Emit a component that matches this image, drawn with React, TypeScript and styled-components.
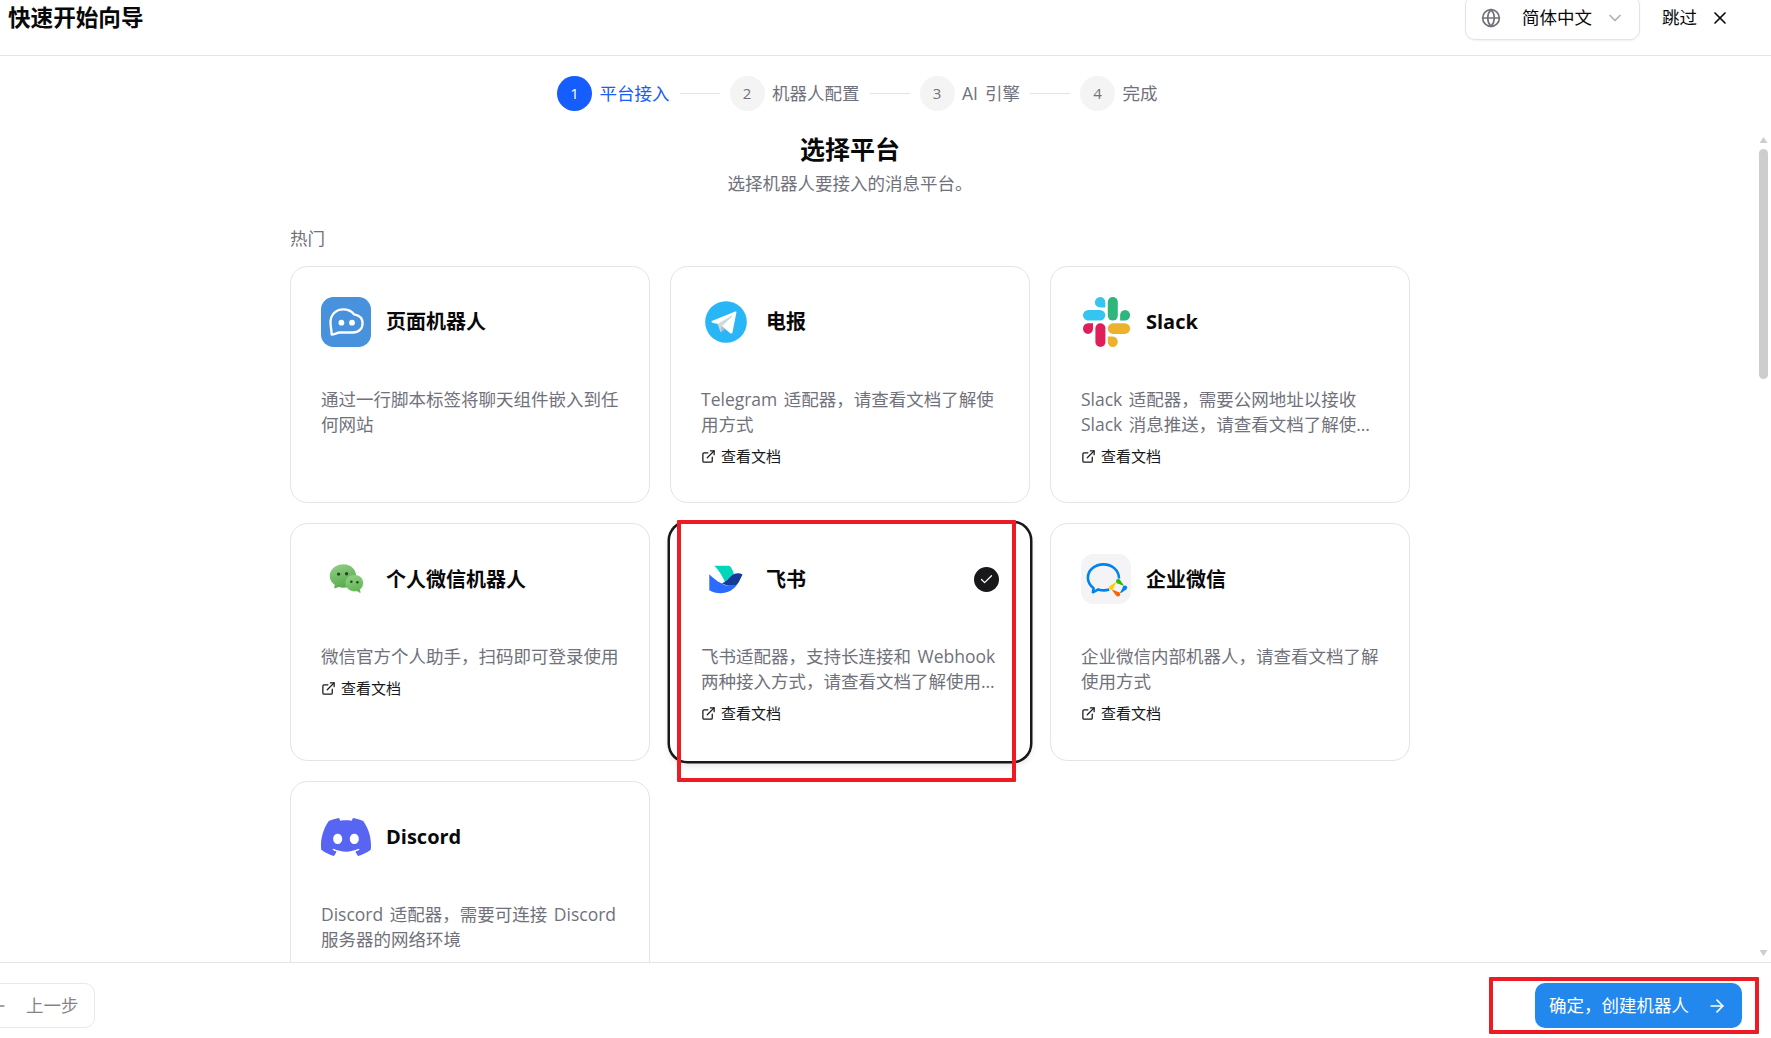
import React from 'react';
import styled, { createGlobalStyle, css } from 'styled-components';
import { ArrowLeft, ArrowRight, Check, ChevronDown, ExternalLink, Globe, X } from 'lucide-react';
import { SiDiscord } from 'react-icons/si';

const GlobalStyle = createGlobalStyle`
  * { box-sizing: border-box; }
  body {
    margin: 0;
    background: #fff;
    color: #09090b;
    font-family: "Open Sans", "Noto Sans CJK SC", sans-serif;
    font-size: 17.5px;
    line-height: 25px;
    overflow: hidden;
  }
  button { font: inherit; color: inherit; background: none; border: 0; padding: 0; }
  h1, h2, h3, p { margin: 0; }
`;

const Page = styled.div`
  display: flex;
  flex-direction: column;
  height: 1038px;
  width: 1771px;
  overflow: hidden;
`;

const Header = styled.header`
  display: flex;
  align-items: center;
  justify-content: space-between;
  height: 56px;
  padding: 0 41px 20px 8px;
  border-bottom: 1px solid #e4e4e7;
`;

const HeaderTitle = styled.h1`
  padding-top: 1px;
  font-size: 22.6px;
  font-weight: 700;
  line-height: 30px;
`;

const HeaderActions = styled.div`
  display: flex;
  align-items: center;
  gap: 22px;
`;

const LanguageSelect = styled.button`
  display: flex;
  align-items: center;
  width: 175px;
  height: 45px;
  margin: -5px 0;
  padding: 0 14px 0 15px;
  border: 1px solid #e4e4e7;
  border-radius: 10px;
  box-shadow: 0 1px 2px rgba(0, 0, 0, 0.06);

  svg:first-child { color: #71717b; }
  svg:last-child { color: #71717b; opacity: 0.55; margin-left: auto; }
  span { margin-left: 21px; }
`;

const SkipButton = styled.button`
  display: flex;
  align-items: center;
  gap: 13px;
`;

const Stepper = styled.nav`
  display: flex;
  align-items: flex-start;
  gap: 10px;
  height: 76px;
  flex: none;
  padding: 20px 0 0 557px;
`;

const StepItem = styled.div<{ $active?: boolean }>`
  display: flex;
  align-items: center;
  gap: 7.5px;
  color: ${(p) => (p.$active ? '#155dfc' : '#71717b')};
  white-space: nowrap;
  word-spacing: 2.5px;
`;

const StepNumber = styled.span<{ $active?: boolean }>`
  display: flex;
  align-items: center;
  justify-content: center;
  width: 35px;
  height: 35px;
  border-radius: 50%;
  font-size: 15px;
  background: ${(p) => (p.$active ? '#155dfc' : '#f4f4f5')};
  color: ${(p) => (p.$active ? '#fff' : '#71717b')};
`;

const StepLine = styled.span`
  width: 40px;
  height: 1px;
  margin-top: 17px;
  background: #e4e4e7;
`;

const Body = styled.main`
  display: flex;
  justify-content: space-between;
  flex: 1;
  min-height: 0;
  overflow: hidden;
`;

const Content = styled.div`
  width: 1120px;
  margin-left: 290px;
`;

const Heading = styled.h2`
  font-size: 25px;
  font-weight: 700;
  line-height: 35px;
  text-align: center;
`;

const Subtitle = styled.p`
  margin-top: 4px;
  color: #71717b;
  text-align: center;
`;

const GroupLabel = styled.p`
  margin: 30px 0 14.75px;
  color: #71717b;
`;

const Grid = styled.div`
  display: grid;
  grid-template-columns: repeat(3, 360px);
  grid-auto-rows: 237.5px;
  gap: 20px;
`;

const Card = styled.article<{ $selected?: boolean }>`
  padding: 30px;
  border: 1px solid #e4e4e7;
  border-radius: 17.5px;
  background: #fff;
  ${(p) =>
    p.$selected &&
    css`
      border-color: transparent;
      box-shadow: 0 0 0 2.5px #18181b, 0 4px 7px 1px rgba(0, 0, 0, 0.1);
    `}
`;

const CardHead = styled.div`
  display: flex;
  align-items: center;
  gap: 15px;
  height: 50px;

  > svg { flex: none; }
`;

const CardTitle = styled.h3`
  flex: 1;
  font-size: 20px;
  font-weight: 700;
`;

const CheckMark = styled.span`
  display: flex;
  align-items: center;
  justify-content: center;
  width: 25px;
  height: 25px;
  border-radius: 50%;
  background: #18181b;
  color: #fff;
`;

const Description = styled.p`
  margin-top: 40px;
  color: #71717b;
  word-spacing: 2px;
`;

const DocLink = styled.a`
  display: flex;
  align-items: center;
  gap: 5px;
  margin-top: 9px;
  font-size: 15px;
  line-height: 20px;
  color: #18181b;

  svg { position: relative; top: 0.5px; }
`;

const ScrollTrack = styled.div`
  display: flex;
  flex-direction: column;
  align-items: center;
  width: 13px;
  padding: 5px 2px 6px 0;
`;

const Thumb = styled.div`
  width: 9px;
  height: 230px;
  margin-top: 6px;
  border-radius: 5px;
  background: #cdcdcd;
`;

const ScrollArrow = styled.span<{ $down?: boolean }>`
  width: 8px;
  height: 6px;
  background: #cdcdcd;
  clip-path: ${(p) => (p.$down ? 'polygon(0 0, 100% 0, 50% 100%)' : 'polygon(50% 0, 100% 100%, 0 100%)')};
  margin-top: ${(p) => (p.$down ? 'auto' : '0')};
`;

const Footer = styled.footer`
  display: flex;
  align-items: flex-start;
  justify-content: space-between;
  height: 76px;
  flex: none;
  padding: 20px 29px 0 0;
  border-top: 1px solid #e4e4e7;
`;

const BackButton = styled.button`
  display: flex;
  align-items: center;
  gap: 18px;
  height: 45px;
  margin-left: -27px;
  padding: 0 15px 0 14px;
  border: 1px solid #d4d4d8;
  border-radius: 10px;
  opacity: 0.5;
`;

const NextButton = styled.button`
  display: flex;
  align-items: center;
  justify-content: space-between;
  width: 207px;
  height: 45px;
  padding: 0 15px 0 14px;
  border-radius: 10px;
  background: #2388ee;
  color: #fff;
`;

const Marker = styled.div<{ $x: number; $y: number; $w: number; $h: number }>`
  position: absolute;
  left: ${(p) => p.$x}px;
  top: ${(p) => p.$y}px;
  width: ${(p) => p.$w}px;
  height: ${(p) => p.$h}px;
  border: 4px solid #ed1c24;
  border-radius: 1px;
`;

const WebBotLogo = () => (
  <svg width="50" height="50" viewBox="0 0 50 50" fill="none">
    <rect width="50" height="50" rx="12.5" fill="#4791dd" />
    <path
      d="M10.6 37.6C10.9 34 9.5 30.5 9.5 25.5C9.5 17.8 14.8 12.3 22.2 12.3C27.2 12.3 30.8 14.3 33 17.3C38.2 18.2 41.6 21.4 41.6 26.2C41.6 31.6 37.7 35.5 32 35.5H19C15.8 35.5 13.4 37.7 10.6 37.6Z"
      stroke="#fff"
      strokeWidth="2.3"
      strokeLinejoin="round"
    />
    <circle cx="20.4" cy="25.7" r="2.9" fill="#fff" />
    <circle cx="31" cy="25.7" r="2.9" fill="#fff" />
  </svg>
);

const TelegramLogo = () => (
  <svg width="50" height="50" viewBox="0 0 48 48">
    <circle cx="24" cy="24" r="20" fill="#29b6f6" />
    <path fill="#fff" d="M33.95,15l-3.746,19.126c0,0-0.161,0.874-1.245,0.874c-0.576,0-0.873-0.274-0.873-0.274l-8.114-6.733l-3.97-2.001l-5.095-1.355c0,0-0.907-0.262-0.907-1.012c0-0.625,0.933-0.923,0.933-0.923l21.316-8.468c-0.001-0.001,0.651-0.235,1.126-0.234C33.667,14,34,14.125,34,14.5C34,14.75,33.95,15,33.95,15z" />
    <path fill="#b0bec5" d="M23,30.505l-3.426,3.374c0,0-0.149,0.115-0.348,0.12c-0.069,0.002-0.143-0.009-0.219-0.043l0.964-5.965L23,30.505z" />
    <path fill="#cfd8dc" d="M29.897,18.196c-0.169-0.22-0.481-0.26-0.701-0.093L16,26c0,0,2.106,5.892,2.427,6.912c0.322,1.021,0.58,1.045,0.58,1.045l0.964-5.965l9.832-9.096C30.023,18.729,30.064,18.416,29.897,18.196z" />
  </svg>
);

const SlackLogo = () => (
  <svg width="50" height="50" viewBox="0 0 50 50">
    <path fill="#36c5f0" d="M24.3 10.5H19.3A5.2 5.2 0 1 1 24.3 5.3Z" />
    <rect x="2" y="13" width="22.3" height="10.6" rx="5.3" fill="#36c5f0" />
    <rect x="26.8" y="0" width="10" height="23.6" rx="5" fill="#2eb67d" />
    <path fill="#2eb67d" d="M39.1 23.6V18.3A5 5.3 0 1 1 44.1 23.6Z" />
    <path fill="#e01e5a" d="M12 26.3V31.6A5 5.3 0 1 1 7 26.3Z" />
    <rect x="14.4" y="26.3" width="10" height="23.7" rx="5" fill="#e01e5a" />
    <rect x="26.8" y="26.3" width="22.3" height="10.6" rx="5.3" fill="#ecb22e" />
    <path fill="#ecb22e" d="M26.8 39.4H31.8A5 5.3 0 1 1 26.8 44.7Z" />
  </svg>
);

const WeChatLogo = () => (
  <svg width="50" height="50" viewBox="0 0 50 50">
    <defs>
      <linearGradient id="wxBig" x1="0" y1="0" x2="0.4" y2="1">
        <stop offset="0" stopColor="#96d08c" />
        <stop offset="1" stopColor="#58ab4c" />
      </linearGradient>
      <linearGradient id="wxSmall" x1="0" y1="0" x2="0.3" y2="1">
        <stop offset="0" stopColor="#93d186" />
        <stop offset="1" stopColor="#62b556" />
      </linearGradient>
    </defs>
    <path fill="url(#wxBig)" d="M22.3 10.2C30 10.2 35.2 15.4 35.2 22S30 33.7 22.3 33.7C20.5 33.7 19 33.4 17.7 32.9L13.2 34.6L13.7 30.7C10.6 28.6 8.7 25.6 8.7 22C8.7 15.4 14.6 10.2 22.3 10.2Z" />
    <path fill="url(#wxSmall)" stroke="#8bc780" strokeWidth="0.4" d="M33.4 21C38.6 21 42.1 24.6 42.1 29C42.1 31.6 40.9 33.7 39 35.2L39.3 38.9L35.8 36.9C35 37.1 34.3 37.2 33.4 37.2C28.3 37.2 24.6 33.5 24.6 29C24.6 24.6 28.3 21 33.4 21Z" />
    <circle cx="17.6" cy="20.1" r="1.7" fill="#25491f" />
    <circle cx="25.6" cy="19.7" r="1.7" fill="#25491f" />
    <circle cx="30.3" cy="27.8" r="1.3" fill="#25491f" />
    <circle cx="36.4" cy="28.2" r="1.3" fill="#25491f" />
  </svg>
);

const FeishuLogo = () => (
  <svg width="50" height="50" viewBox="0 0 50 50">
    <path fill="#00d6b9" d="M13.4 11.7H27.6C28.4 11.7 29 12 29.5 12.7C31 14.9 32.2 17.4 32.9 20C29.7 21.5 27.5 24.5 24.2 28.5C21.5 22 18 16.3 13.4 11.7Z" />
    <path fill="#2b6bff" d="M8.3 20.2C13.5 25.3 20 30.3 27 31.8C31 32.6 34.6 31.4 36.8 29.6C33 35.8 27 39.3 19.5 39.3C15.3 39.3 11.5 38.2 8.3 36.3Z" />
    <path fill="#133c9a" d="M41.6 20.4C37.5 18.5 33 19.3 30 22C27 24.8 25.3 27.9 20.6 29.2C26 31.7 31.5 33.2 36.2 30.2C38.6 27.8 39.4 23.8 41.6 20.4Z" />
  </svg>
);

const WeComLogo = () => (
  <svg width="50" height="50" viewBox="0 0 50 50" fill="none">
    <rect width="50" height="50" rx="12.5" fill="#f4f4f6" />
    <path
      d="M38 24.4C38 16.4 31.2 10.4 22.4 10.4C13.6 10.4 6.9 16.4 6.9 23.8C6.9 28 9 31.4 12.6 34.2L11.9 38.3L17.3 35.4C20.5 36.5 24.6 36.7 28.2 35.6"
      stroke="#0082ef"
      strokeWidth="2.6"
      strokeLinejoin="round"
    />
    <g>
      <circle cx="37.2" cy="27.2" r="2.2" fill="#2dbc00" />
      <path d="M38.8 25.8L42.8 31.2L42.3 31.8L35.8 28.9Z" fill="#2dbc00" />
      <circle cx="44" cy="33.6" r="2.2" fill="#0082ef" />
      <path d="M45.5 35.2L39.8 39.2L39.2 38.6L42.5 32Z" fill="#0082ef" />
      <circle cx="37" cy="40.2" r="2.2" fill="#fb6500" />
      <path d="M35.4 41.7L31.2 36.4L31.8 35.8L38.5 38.6Z" fill="#fb6500" />
      <circle cx="30.3" cy="33.8" r="2.2" fill="#fc0" />
      <path d="M28.8 32.2L34.4 28.2L35 28.8L31.8 35.3Z" fill="#fc0" />
    </g>
  </svg>
);

interface Platform {
  name: string;
  logo: React.ReactNode;
  description: string;
  docs?: boolean;
  selected?: boolean;
}

const platforms: Platform[] = [
  { name: '页面机器人', logo: <WebBotLogo />, description: '通过一行脚本标签将聊天组件嵌入到任何网站' },
  { name: '电报', logo: <TelegramLogo />, description: 'Telegram 适配器，请查看文档了解使用方式', docs: true },
  { name: 'Slack', logo: <SlackLogo />, description: 'Slack 适配器，需要公网地址以接收 Slack 消息推送，请查看文档了解使…', docs: true },
  { name: '个人微信机器人', logo: <WeChatLogo />, description: '微信官方个人助手，扫码即可登录使用', docs: true },
  { name: '飞书', logo: <FeishuLogo />, description: '飞书适配器，支持长连接和 Webhook 两种接入方式，请查看文档了解使用…', docs: true, selected: true },
  { name: '企业微信', logo: <WeComLogo />, description: '企业微信内部机器人，请查看文档了解使用方式', docs: true },
  { name: 'Discord', logo: <SiDiscord size={50} color="#5865f2" />, description: 'Discord 适配器，需要可连接 Discord 服务器的网络环境' },
];

const steps = ['平台接入', '机器人配置', 'AI 引擎', '完成'];

export default function App() {
  return (
    <>
      <GlobalStyle />
      <Page lang="zh-CN">
        <Header>
          <HeaderTitle>快速开始向导</HeaderTitle>
          <HeaderActions>
            <LanguageSelect>
              <Globe size={20} />
              <span>简体中文</span>
              <ChevronDown size={20} />
            </LanguageSelect>
            <SkipButton>
              跳过
              <X size={20} />
            </SkipButton>
          </HeaderActions>
        </Header>
        <Stepper>
          {steps.map((label, i) => (
            <React.Fragment key={label}>
              {i > 0 && <StepLine />}
              <StepItem $active={i === 0}>
                <StepNumber $active={i === 0}>{i + 1}</StepNumber>
                {label}
              </StepItem>
            </React.Fragment>
          ))}
        </Stepper>
        <Body>
          <Content>
            <Heading>选择平台</Heading>
            <Subtitle>选择机器人要接入的消息平台。</Subtitle>
            <GroupLabel>热门</GroupLabel>
            <Grid>
              {platforms.map((p) => (
                <Card key={p.name} $selected={p.selected}>
                  <CardHead>
                    {p.logo}
                    <CardTitle>{p.name}</CardTitle>
                    {p.selected && (
                      <CheckMark>
                        <Check size={15} />
                      </CheckMark>
                    )}
                  </CardHead>
                  <Description>{p.description}</Description>
                  {p.docs && (
                    <DocLink>
                      <ExternalLink size={15} />
                      查看文档
                    </DocLink>
                  )}
                </Card>
              ))}
            </Grid>
          </Content>
          <ScrollTrack>
            <ScrollArrow />
            <Thumb />
            <ScrollArrow $down />
          </ScrollTrack>
        </Body>
        <Footer>
          <BackButton>
            <ArrowLeft size={20} />
            上一步
          </BackButton>
          <NextButton>
            确定，创建机器人
            <ArrowRight size={20} />
          </NextButton>
        </Footer>
      </Page>
      <Marker $x={677} $y={520} $w={339} $h={262} />
      <Marker $x={1489} $y={977} $w={270} $h={57} />
    </>
  );
}
